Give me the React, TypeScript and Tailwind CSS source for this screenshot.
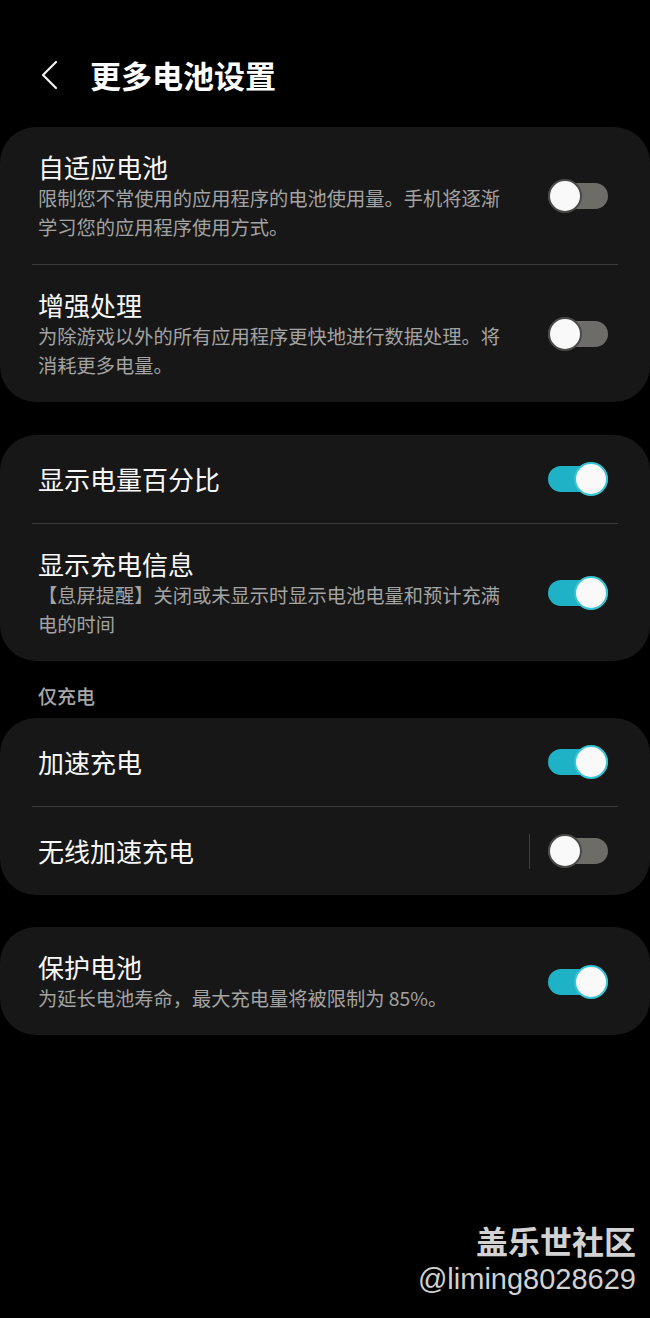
import React, { FC } from "react";

type RowProps = {
  title: string;
  desc?: string;
  on: boolean;
  divider?: boolean;
  split?: boolean;
};

const Toggle: FC<{ on: boolean }> = ({ on }) => {
  return (
    <div
      className={`w-[60px] h-[26px] rounded-full flex items-center shrink-0 ${
        on ? "bg-[#1fb2c6] justify-end" : "bg-[#6d6c68] justify-start"
      }`}
    >
      <div
        className={`w-[34px] h-[34px] rounded-full bg-[#f9f9f9] border-2 ${
          on ? "border-[#37c4d3]" : "border-[#4a4a48]"
        }`}
      />
    </div>
  );
};

const Row: FC<RowProps> = ({ title, desc, on, divider, split }) => {
  return (
    <>
      {divider && <div className="mx-[32px] h-px bg-[#3b3b3b]" />}
      <div
        className={`flex items-center gap-[38px] pl-[38px] pr-[42px] ${
          desc ? "pt-[23px] pb-[22px]" : "h-[88px]"
        }`}
      >
        <div className="flex-1 min-w-0">
          <div className="text-[26px] leading-[34px] text-[#f7f7f7]">{title}</div>
          {desc && (
            <p className="text-[19.25px] leading-[29px] text-[#a3a3a3]">{desc}</p>
          )}
        </div>
        <div className="flex items-center">
          {split && <div className="w-px h-[35px] bg-[#3e3e3e] mr-[18px]" />}
          <Toggle on={on} />
        </div>
      </div>
    </>
  );
};

const Card: FC<{ children: React.ReactNode; className?: string }> = ({
  children,
  className = "",
}) => (
  <div className={`bg-[#171717] rounded-[36px] ${className}`}>{children}</div>
);

export default function App() {
  return (
    <div
      className="min-h-[1318px] bg-black flex flex-col"
      style={{ fontFamily: '"Noto Sans CJK SC", "Noto Sans", sans-serif' }}
    >
      <div className="h-[127px] pt-[22px] flex items-center">
        <svg
          width="18"
          height="30"
          viewBox="0 0 18 30"
          className="ml-[40px]"
          fill="none"
          stroke="#f2f2f2"
          strokeWidth="2.2"
          strokeLinecap="round"
          strokeLinejoin="round"
        >
          <path d="M16 2 L3 15 L16 28" />
        </svg>
        <h1 className="ml-[32px] text-[31px] font-bold text-white leading-none">
          更多电池设置
        </h1>
      </div>

      <Card>
        <Row
          title="自适应电池"
          desc="限制您不常使用的应用程序的电池使用量。手机将逐渐学习您的应用程序使用方式。"
          on={false}
        />
        <Row
          title="增强处理"
          desc="为除游戏以外的所有应用程序更快地进行数据处理。将消耗更多电量。"
          on={false}
          divider
        />
      </Card>

      <Card className="mt-[33px]">
        <Row title="显示电量百分比" on />
        <Row
          title="显示充电信息"
          desc="【息屏提醒】关闭或未显示时显示电池电量和预计充满电的时间"
          on
          divider
        />
      </Card>

      <div className="mt-[20px] mb-[8px] pl-[38px] text-[19px] leading-[29px] font-medium text-[#a6a6a6]">
        仅充电
      </div>

      <Card>
        <Row title="加速充电" on />
        <Row title="无线加速充电" on={false} divider split />
      </Card>

      <Card className="mt-[32px]">
        <Row
          title="保护电池"
          desc="为延长电池寿命，最大充电量将被限制为 85%。"
          on
        />
      </Card>

      <div className="mt-auto pb-[20px] pr-[14px] flex flex-col items-end text-[#d2d2d2]">
        <div className="text-[32px] font-bold leading-[40px]">盖乐世社区</div>
        <div
          className="text-[29px] leading-[38px]"
          style={{ fontFamily: '"Liberation Sans", Arial, sans-serif' }}
        >
          @liming8028629
        </div>
      </div>
    </div>
  );
}
